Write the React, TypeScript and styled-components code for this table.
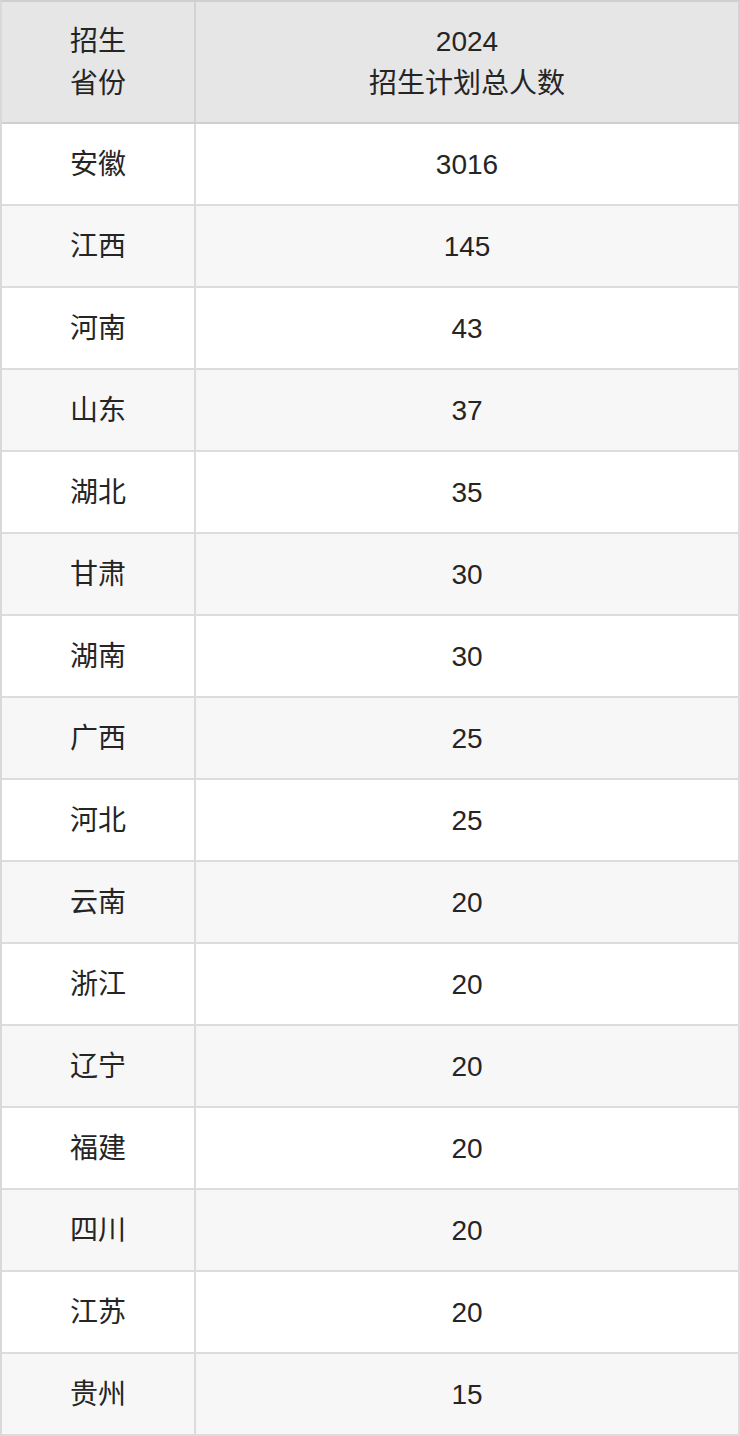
import styled, { createGlobalStyle } from 'styled-components';

const GlobalStyle = createGlobalStyle`
  html, body {
    margin: 0;
    padding: 0;
    background: #ffffff;
  }
`;

const Table = styled.table`
  width: 740px;
  border-collapse: separate;
  border-spacing: 0;
  table-layout: fixed;
  border-top: 2px solid #cfcfcf;
  border-left: 2px solid #d9d9d9;
  font-family: 'Liberation Sans', 'Noto Sans CJK SC', sans-serif;
  font-size: 28px;
  line-height: 42px;
  color: #252525;
`;

const HeadCell = styled.th`
  background: #e6e6e6;
  font-weight: 400;
  padding: 19px 0 17px;
  text-align: center;
  border-right: 2px solid #d2d2d2;
  border-bottom: 2px solid #cfcfcf;
`;

const Row = styled.tr<{ $striped: boolean }>`
  background: ${({ $striped }) => ($striped ? '#f7f7f7' : '#ffffff')};
`;

const Cell = styled.td`
  padding: 20px 0 18px;
  text-align: center;
  border-right: 2px solid #dcdcdc;
  border-bottom: 2px solid #dcdcdc;
`;

const rows: [string, number][] = [
  ['安徽', 3016],
  ['江西', 145],
  ['河南', 43],
  ['山东', 37],
  ['湖北', 35],
  ['甘肃', 30],
  ['湖南', 30],
  ['广西', 25],
  ['河北', 25],
  ['云南', 20],
  ['浙江', 20],
  ['辽宁', 20],
  ['福建', 20],
  ['四川', 20],
  ['江苏', 20],
  ['贵州', 15],
];

const App: React.FC = () => (
  <>
    <GlobalStyle />
    <Table>
      <colgroup>
        <col style={{ width: 194 }} />
        <col />
      </colgroup>
      <thead>
        <tr>
          <HeadCell>
            招生
            <br />
            省份
          </HeadCell>
          <HeadCell>
            2024
            <br />
            招生计划总人数
          </HeadCell>
        </tr>
      </thead>
      <tbody>
        {rows.map(([province, total], i) => (
          <Row key={province + i} $striped={i % 2 === 1}>
            <Cell>{province}</Cell>
            <Cell>{total}</Cell>
          </Row>
        ))}
      </tbody>
    </Table>
  </>
);

export default App;
